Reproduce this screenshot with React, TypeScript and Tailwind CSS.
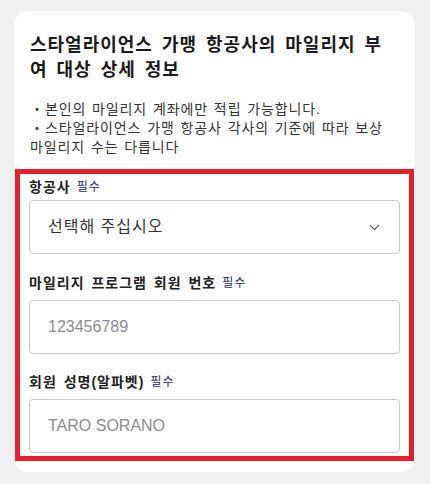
import { ChevronDown } from "lucide-react";

const Label = ({ text }: { text: string }) => (
  <label className="flex h-[20px] items-center gap-[6px] text-[14px] leading-[20px]">
    <span className="font-bold tracking-[1px] text-[#222] [word-spacing:2px]">{text}</span>
    <span className="text-[12px] tracking-[1px] text-[#1c2a78]">필수</span>
  </label>
);

export default function App() {
  return (
    <div className="min-h-screen w-full bg-[#f0f0f0] pl-[14px] pr-[15px] pt-[11px] pb-[12px] font-['Liberation_Sans','Noto_Sans_CJK_KR',sans-serif] text-[#222]">
      <div className="w-[401px] rounded-[14px] bg-white pt-[22px] pb-[11px]">
        <div className="px-4">
          <h2 className="text-[18px] font-bold leading-[25px] tracking-[1px] text-[#1a1a1a] [word-spacing:3px]">
            스타얼라이언스 가맹 항공사의 마일리지 부여 대상 상세 정보
          </h2>
          <div className="mt-[17px] break-keep text-[14px] leading-[19px] tracking-[0.9px] text-[#333] [word-spacing:1px]">
            <p>・본인의 마일리지 계좌에만 적립 가능합니다.</p>
            <p>・스타얼라이언스 가맹 항공사 각사의 기준에 따라 보상 마일리지 수는 다릅니다</p>
          </div>
        </div>

        <div className="mx-px mt-[12px] border-[5px] border-[#e3202b] px-[9px] pt-[3px] pb-[3px]">
          <Label text="항공사" />
          <div className="mt-[3px] flex h-[54px] items-center justify-between rounded-[4px] border border-[#cbcbcb] pl-[18px] pr-[16px]">
            <span className="text-[16px] tracking-[1px] text-[#333]">선택해 주십시오</span>
            <ChevronDown className="h-[17px] w-[17px] text-[#555]" strokeWidth={1.6} />
          </div>

          <div className="mt-[19px]">
            <Label text="마일리지 프로그램 회원 번호" />
          </div>
          <input
            className="mt-[7px] block h-[54px] w-full rounded-[4px] border border-[#cbcbcb] pl-[18px] text-[16px] text-[#333] outline-none placeholder:text-[#8c8c8c]"
            placeholder="123456789"
          />

          <div className="mt-[18px]">
            <Label text="회원 성명(알파벳)" />
          </div>
          <input
            className="mt-[7px] block h-[54px] w-full rounded-[4px] border border-[#cbcbcb] pl-[18px] text-[16px] text-[#333] outline-none placeholder:text-[#8c8c8c]"
            placeholder="TARO SORANO"
          />
        </div>
      </div>
    </div>
  );
}
